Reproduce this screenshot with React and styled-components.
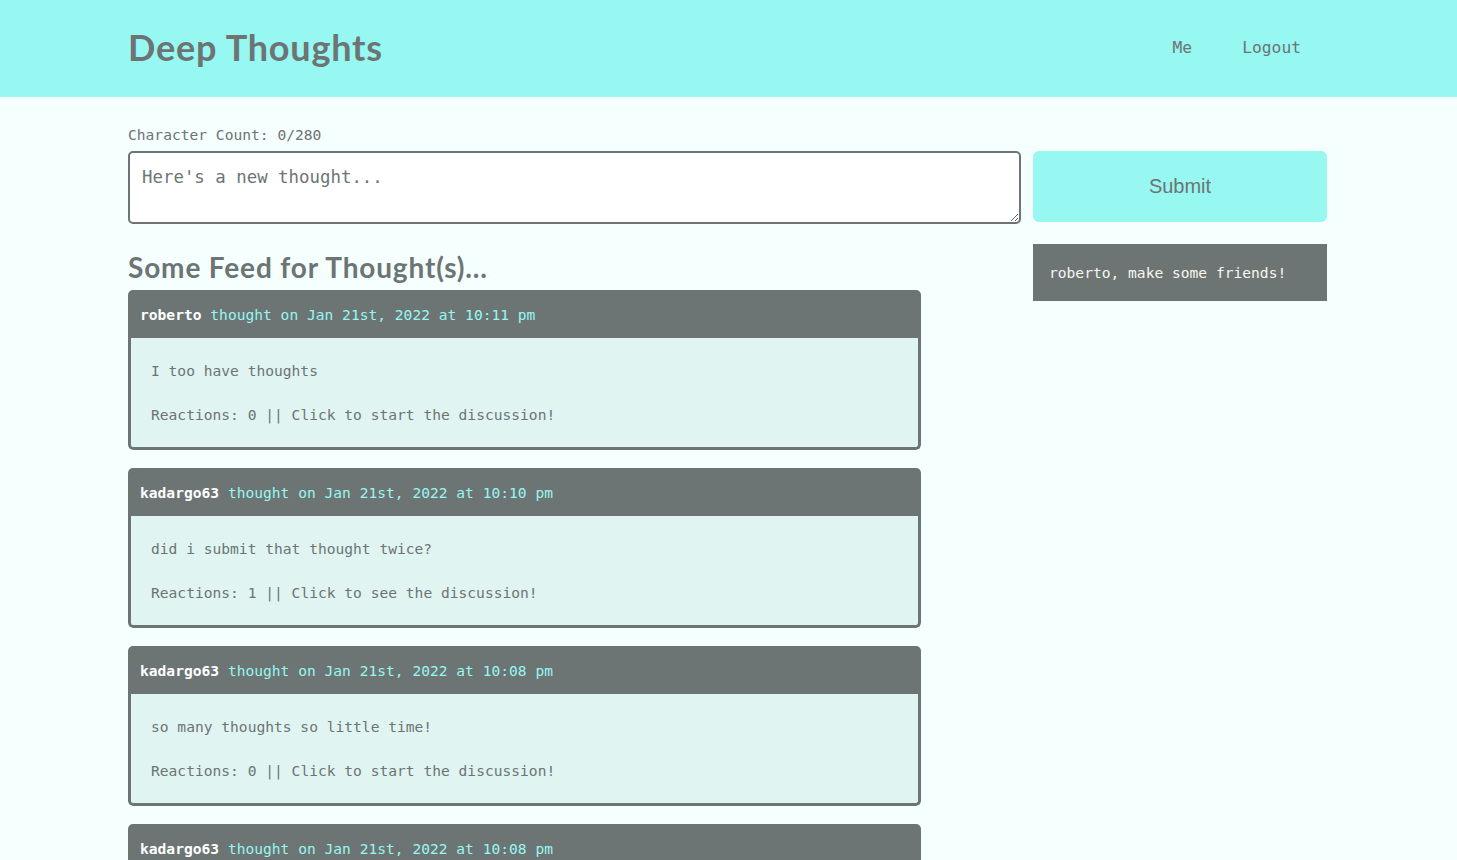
import React, { useState } from 'react';
import styled, { createGlobalStyle } from 'styled-components';

const thoughts = [
  {
    user: 'roberto',
    date: 'Jan 21st, 2022 at 10:11 pm',
    text: 'I too have thoughts',
    reactions: 0,
  },
  {
    user: 'kadargo63',
    date: 'Jan 21st, 2022 at 10:10 pm',
    text: 'did i submit that thought twice?',
    reactions: 1,
  },
  {
    user: 'kadargo63',
    date: 'Jan 21st, 2022 at 10:08 pm',
    text: 'so many thoughts so little time!',
    reactions: 0,
  },
  {
    user: 'kadargo63',
    date: 'Jan 21st, 2022 at 10:08 pm',
    text: 'one more thought for the road',
    reactions: 0,
  },
];

const GlobalStyle = createGlobalStyle`
  html, body {
    margin: 0;
    padding: 0;
    background: #f5fffe;
    overflow: hidden;
  }
  body {
    font-family: 'DejaVu Sans Mono', 'Liberation Mono', monospace;
    color: #6c7474;
  }
  * {
    box-sizing: border-box;
  }
`;

const App = () => {
  const [text, setText] = useState('');

  return (
    <>
      <GlobalStyle />
      <Header>
        <Container className="bar">
          <Logo>Deep Thoughts</Logo>
          <Nav>
            <a href="#me">Me</a>
            <a href="#logout">Logout</a>
          </Nav>
        </Container>
      </Header>

      <Main>
        <Container>
          <Count>Character Count: {text.length}/280</Count>
          <FormRow>
            <TextArea
              placeholder="Here's a new thought..."
              value={text}
              onChange={(e) => setText(e.target.value.slice(0, 280))}
            />
            <SubmitBtn type="button">Submit</SubmitBtn>
          </FormRow>

          <Columns>
            <Feed>
              <FeedTitle>Some Feed for Thought(s)...</FeedTitle>
              {thoughts.map((item, idx) => (
                <Card key={idx}>
                  <CardHeader>
                    <strong>{item.user}</strong> thought on {item.date}
                  </CardHeader>
                  <CardBody>
                    <p>{item.text}</p>
                    <p>
                      Reactions: {item.reactions} || Click to{' '}
                      {item.reactions ? 'see' : 'start'} the discussion!
                    </p>
                  </CardBody>
                </Card>
              ))}
            </Feed>
            <Side>
              <FriendBox>roberto, make some friends!</FriendBox>
            </Side>
          </Columns>
        </Container>
      </Main>
    </>
  );
};

export default App;

const Container = styled.div`
  padding: 0 130px 0 128px;

  &.bar {
    display: flex;
    justify-content: space-between;
    align-items: center;
    height: 97px;
    padding-bottom: 4px;
  }
`;

const Header = styled.header`
  background: #97f7f1;
`;

const Logo = styled.h1`
  margin: 0;
  font-family: 'Lato', 'Open Sans', sans-serif;
  font-weight: 700;
  font-size: 36px;
  letter-spacing: 0.8px;
  color: #6c7474;
`;

const Nav = styled.nav`
  display: flex;
  gap: 50px;
  padding-right: 26px;
  padding-top: 2px;

  a {
    color: #6c7474;
    text-decoration: none;
    font-size: 16.3px;
  }
`;

const Main = styled.main`
  padding-top: 29px;
`;

const Count = styled.p`
  margin: 0 0 8px;
  font-size: 14.6px;
`;

const FormRow = styled.div`
  display: flex;
  gap: 12px;
  align-items: flex-start;
`;

const TextArea = styled.textarea`
  flex: 0 0 893px;
  height: 73px;
  padding: 14px 12px;
  border: 2px solid #6c7474;
  border-radius: 5px;
  background: #fff;
  font-family: 'DejaVu Sans Mono', monospace;
  font-size: 17.4px;
  color: #6c7474;
  resize: vertical;

  &::placeholder {
    color: #6c7474;
  }
`;

const SubmitBtn = styled.button`
  flex: 0 0 294px;
  height: 71px;
  border: none;
  border-radius: 6px;
  background: #97f7f1;
  color: #6c7474;
  font-family: 'Liberation Sans', Arial, sans-serif;
  font-size: 20px;
  cursor: pointer;
`;

const Columns = styled.div`
  display: grid;
  grid-template-columns: 793px 1fr;
  column-gap: 112px;
  margin-top: 20px;
`;

const Feed = styled.section``;

const FeedTitle = styled.h3`
  margin: 6px 0 6px;
  font-family: 'Lato', 'Open Sans', sans-serif;
  font-weight: 700;
  font-size: 28px;
  letter-spacing: 0.85px;
  color: #6c7474;
`;

const Card = styled.article`
  margin-bottom: 18px;
  border-radius: 5px;
  overflow: hidden;
`;

const CardHeader = styled.div`
  height: 48px;
  padding: 0 12px;
  display: flex;
  align-items: center;
  gap: 8.8px;
  background: #6c7474;
  color: #97f7f1;
  font-size: 14.6px;

  strong {
    color: #fff;
    font-weight: 700;
  }
`;

const CardBody = styled.div`
  height: 112px;
  padding: 15px 20px;
  background: #e0f4f2;
  border: 3px solid #6c7474;
  border-top: none;
  border-radius: 0 0 5px 5px;
  font-size: 14.6px;

  p {
    margin: 9px 0 0;
    line-height: 17px;
  }
  p + p {
    margin-top: 27px;
  }
`;

const Side = styled.aside``;

const FriendBox = styled.div`
  height: 57px;
  padding: 0 16px;
  display: flex;
  align-items: center;
  background: #6c7474;
  color: #f7f7ee;
  font-size: 14.6px;
`;
